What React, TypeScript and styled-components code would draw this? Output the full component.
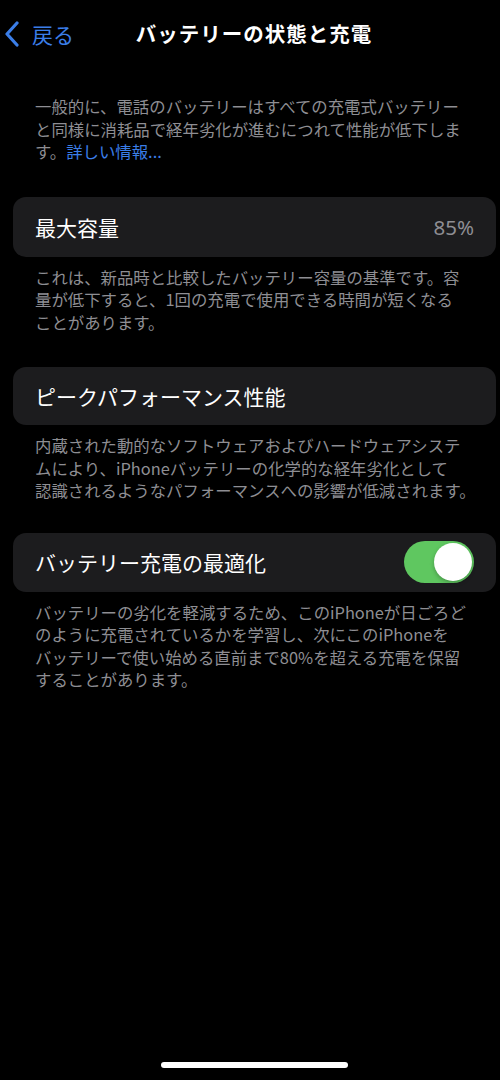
import styled, { createGlobalStyle } from "styled-components";

const GlobalStyle = createGlobalStyle`
  html, body {
    margin: 0;
    padding: 0;
    background: #000;
  }
  body {
    font-family: "Noto Sans CJK JP", "Noto Sans", sans-serif;
    -webkit-font-smoothing: antialiased;
  }
`;

const Screen = styled.div`
  width: 500px;
  height: 1080px;
  background: #000;
  color: #fff;
  display: flex;
  flex-direction: column;
  overflow: hidden;
`;

const NavBar = styled.header`
  height: 68px;
  display: grid;
  grid-template-columns: 120px 1fr 112px;
  align-items: center;
`;

const BackButton = styled.a`
  display: flex;
  align-items: center;
  gap: 12px;
  padding-left: 4px;
  color: #3b7ee8;
  font-size: 21px;
  text-decoration: none;
  margin-top: -1px;
`;

const Title = styled.h1`
  margin: 0;
  text-align: center;
  font-size: 20.5px;
  font-weight: 700;
  letter-spacing: 1px;
  white-space: nowrap;
  margin-top: -2px;
`;

const Content = styled.main`
  flex: 1;
  display: flex;
  flex-direction: column;
  padding: 27px 4px 0 13px;
`;

const Note = styled.p<{ $gap?: number }>`
  margin: 0 0 ${(p) => p.$gap ?? 0}px 0;
  padding: 0 22px;
  font-size: 16.4px;
  line-height: 22.5px;
  color: #8e8e93;
  white-space: nowrap;
`;

const Link = styled.a`
  color: #3b7ee8;
  text-decoration: none;
`;

const Card = styled.div<{ $height: number }>`
  height: ${(p) => p.$height}px;
  background: #1c1c1e;
  border-radius: 13px;
  display: flex;
  align-items: center;
  justify-content: space-between;
  padding: 0 22px 0 22px;
  margin-bottom: 9px;
`;

const Label = styled.span`
  font-size: 21px;
  color: #fff;
`;

const Value = styled.span`
  font-family: "Noto Sans", sans-serif;
  font-size: 20.5px;
  color: #8e8e93;
`;

const Toggle = styled.div<{ $on: boolean }>`
  width: 70px;
  height: 42px;
  border-radius: 21px;
  background: ${(p) => (p.$on ? "#5fc760" : "#39393d")};
  display: flex;
  align-items: center;
  justify-content: ${(p) => (p.$on ? "flex-end" : "flex-start")};
  padding: 0 2px;
  box-sizing: border-box;
  margin-right: 0;
`;

const Knob = styled.div`
  width: 38px;
  height: 38px;
  border-radius: 50%;
  background: #fff;
  box-shadow: 0 2px 4px rgba(0, 0, 0, 0.25);
`;

const HomeBar = styled.div`
  align-self: center;
  width: 187px;
  height: 6px;
  border-radius: 3px;
  background: #fff;
  margin: 0 0 12px 9px;
`;

function Chevron() {
  return (
    <svg width="16" height="26" viewBox="0 0 16 26">
      <path
        d="M13 2 L3 13 L13 24"
        fill="none"
        stroke="#3b7ee8"
        strokeWidth="3.2"
        strokeLinecap="round"
        strokeLinejoin="round"
      />
    </svg>
  );
}

export default function App() {
  return (
    <>
      <GlobalStyle />
      <Screen>
        <NavBar>
          <BackButton href="#">
            <Chevron />
            戻る
          </BackButton>
          <Title>バッテリーの状態と充電</Title>
          <div />
        </NavBar>
        <Content>
          <Note $gap={34}>
            一般的に、電話のバッテリーはすべての充電式バッテリー
            <br />
            と同様に消耗品で経年劣化が進むにつれて性能が低下しま
            <br />
            す。<Link href="#">詳しい情報...</Link>
          </Note>

          <Card $height={60}>
            <Label>最大容量</Label>
            <Value>85%</Value>
          </Card>
          <Note $gap={34}>
            これは、新品時と比較したバッテリー容量の基準です。容
            <br />
            量が低下すると、1回の充電で使用できる時間が短くなる
            <br />
            ことがあります。
          </Note>

          <Card $height={58}>
            <Label>ピークパフォーマンス性能</Label>
          </Card>
          <Note $gap={31}>
            内蔵された動的なソフトウェアおよびハードウェアシステ
            <br />
            ムにより、iPhoneバッテリーの化学的な経年劣化として
            <br />
            認識されるようなパフォーマンスへの影響が低減されます。
          </Note>

          <Card $height={59}>
            <Label>バッテリー充電の最適化</Label>
            <Toggle $on>
              <Knob />
            </Toggle>
          </Card>
          <Note>
            バッテリーの劣化を軽減するため、このiPhoneが日ごろど
            <br />
            のように充電されているかを学習し、次にこのiPhoneを
            <br />
            バッテリーで使い始める直前まで80%を超える充電を保留
            <br />
            することがあります。
          </Note>
        </Content>
        <HomeBar />
      </Screen>
    </>
  );
}
